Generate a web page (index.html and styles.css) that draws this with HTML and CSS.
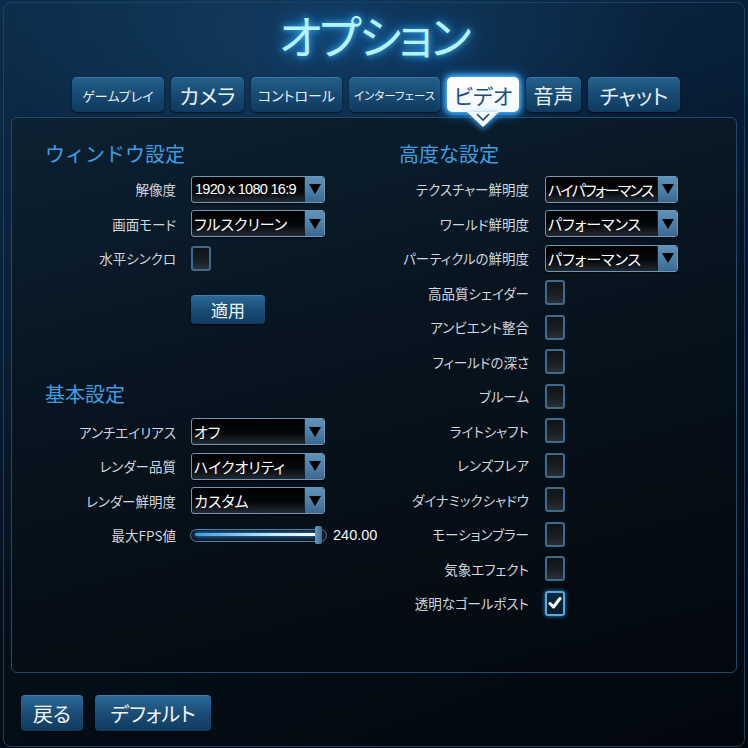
FILE: index.html
```html
<!DOCTYPE html>
<html lang="ja">
<head>
<meta charset="utf-8">
<title>オプション</title>
<link rel="stylesheet" href="styles.css">
</head>
<body>
<div class="frame">
  <h1 class="title">オプション</h1>
  <nav class="tabs">
    <div class="tab t1">ゲームプレイ</div>
    <div class="tab t2">カメラ</div>
    <div class="tab t3">コントロール</div>
    <div class="tab t4">インターフェース</div>
    <div class="tab t5 active">ビデオ
      <svg class="pointer" width="32" height="16" viewBox="0 0 32 16"><polygon points="0,0 32,0 16,15" fill="#f4faff"/><polyline points="10,2 16,8 22,2" fill="none" stroke="#1c4a78" stroke-width="1.6"/></svg>
    </div>
    <div class="tab t6">音声</div>
    <div class="tab t7">チャット</div>
  </nav>
  <section class="panel">
    <div class="col left">
      <h2 class="heading">ウィンドウ設定</h2>
      <div class="row"><span class="label">解像度</span><div class="select"><span class="val num">1920 x 1080 16:9</span><span class="arrow"></span></div></div>
      <div class="row"><span class="label">画面モード</span><div class="select"><span class="val">フルスクリーン</span><span class="arrow"></span></div></div>
      <div class="row"><span class="label">水平シンクロ</span><span class="check"></span></div>
      <div class="apply-row"><button class="btn apply">適用</button></div>
      <h2 class="heading basic">基本設定</h2>
      <div class="row"><span class="label">アンチエイリアス</span><div class="select"><span class="val">オフ</span><span class="arrow"></span></div></div>
      <div class="row"><span class="label">レンダー品質</span><div class="select"><span class="val">ハイクオリティ</span><span class="arrow"></span></div></div>
      <div class="row"><span class="label">レンダー鮮明度</span><div class="select"><span class="val">カスタム</span><span class="arrow"></span></div></div>
      <div class="row slider-row"><span class="label">最大FPS値</span>
        <div class="slider"><span class="fill"></span><span class="thumb"></span></div>
        <span class="slider-val">240.00</span>
      </div>
    </div>
    <div class="col right">
      <h2 class="heading">高度な設定</h2>
      <div class="row"><span class="label">テクスチャー鮮明度</span><div class="select"><span class="val tight">ハイパフォーマンス</span><span class="arrow"></span></div></div>
      <div class="row"><span class="label">ワールド鮮明度</span><div class="select"><span class="val">パフォーマンス</span><span class="arrow"></span></div></div>
      <div class="row"><span class="label">パーティクルの鮮明度</span><div class="select"><span class="val">パフォーマンス</span><span class="arrow"></span></div></div>
      <div class="row"><span class="label">高品質シェイダー</span><span class="check"></span></div>
      <div class="row"><span class="label">アンビエント整合</span><span class="check"></span></div>
      <div class="row"><span class="label">フィールドの深さ</span><span class="check"></span></div>
      <div class="row"><span class="label">ブルーム</span><span class="check"></span></div>
      <div class="row"><span class="label">ライトシャフト</span><span class="check"></span></div>
      <div class="row"><span class="label">レンズフレア</span><span class="check"></span></div>
      <div class="row"><span class="label">ダイナミックシャドウ</span><span class="check"></span></div>
      <div class="row"><span class="label">モーションブラー</span><span class="check"></span></div>
      <div class="row"><span class="label">気象エフェクト</span><span class="check"></span></div>
      <div class="row"><span class="label">透明なゴールポスト</span><span class="check on"><svg width="14" height="14" viewBox="0 0 14 14"><path d="M2 7.5 L5.5 11 L12 2.5" fill="none" stroke="#ffffff" stroke-width="3" stroke-linecap="round" stroke-linejoin="round"/></svg></span></div>
    </div>
  </section>
  <div class="footer">
    <button class="btn back">戻る</button>
    <button class="btn default">デフォルト</button>
  </div>
</div>
</body>
</html>
```

FILE: styles.css
```css
* { box-sizing: border-box; }
html, body { margin: 0; padding: 0; }
body {
  width: 748px;
  height: 748px;
  overflow: hidden;
  background:
    radial-gradient(ellipse 340px 160px at 330px 40px, rgba(22, 70, 112, 0.7) 0%, rgba(22, 70, 112, 0) 100%),
    linear-gradient(160deg, #0d2d4a 0%, #08203a 30%, #04101c 60%, #02070c 100%);
  font-family: "Noto Sans CJK JP", "Noto Sans", sans-serif;
  font-feature-settings: "palt";
  color: #d3dae1;
}
.frame {
  margin: 2px 0 0 3px;
  width: 742px;
  height: 745px;
  border: 1px solid #1b4262;
  border-radius: 8px;
}
.title {
  margin: -2px 0 0;
  height: 76px;
  text-align: center;
  font-size: 46px;
  line-height: 66px;
  font-weight: 400;
  color: #b4f3ff;
  letter-spacing: -2.5px;
  text-shadow: 0 0 6px #3fb6ff, 0 0 16px #1f86d8, 0 0 28px #135a9c;
}
.tabs {
  display: flex;
  gap: 7px;
  padding-left: 68px;
  height: 35px;
}
.tab {
  position: relative;
  height: 35px;
  display: flex;
  align-items: center;
  justify-content: center;
  border-radius: 5px;
  background: linear-gradient(#245f8b 0%, #174a72 50%, #0f3a5d 100%);
  border-top: 1px solid #3a79a6;
  box-shadow: 0 1px 2px rgba(0, 0, 0, 0.7);
  color: #e8f0f6;
  white-space: nowrap;
}
.t1 { width: 92px; font-size: 13px; }
.t2 { width: 73px; font-size: 21px; }
.t3 { width: 91px; font-size: 14px; }
.t4 { width: 91px; font-size: 11.5px; }
.t5 { width: 72px; font-size: 21px; }
.t6 { width: 55px; font-size: 20px; }
.t7 { width: 92px; font-size: 21px; }
.tab.active {
  background: linear-gradient(#ffffff 0%, #f2f9ff 100%);
  border-top: 1px solid #ffffff;
  color: #1c4d80;
  box-shadow: 0 0 5px 2px #49b4ff, 0 0 12px 2px #1c78c8;
}
.pointer {
  position: absolute;
  top: 34px;
  left: 20px;
  filter: drop-shadow(0 2px 3px #3aa6ff);
}
.panel {
  margin: 5px 0 0 7px;
  width: 726px;
  height: 556px;
  border: 1px solid #1d4a6e;
  border-radius: 6px;
  background: linear-gradient(165deg, #0c2132 0%, #07131e 45%, #03080d 100%);
  display: flex;
  padding-top: 24px;
}
.col.left { width: 369px; padding-left: 33px; }
.col.right { width: 355px; padding-left: 18px; }
.heading {
  margin: 0 0 6px;
  height: 24px;
  font-size: 20px;
  line-height: 24px;
  font-weight: 400;
  color: #3c9fe2;
  white-space: nowrap;
  font-feature-settings: normal;
}
.heading.basic { margin-top: 58px; margin-bottom: 9px; }
.row {
  height: 34.5px;
  display: flex;
  align-items: center;
}
.left .label { width: 131px; margin-right: 15px; }
.right .label { width: 130px; margin-right: 16px; }
.label {
  text-align: right;
  font-size: 13.5px;
  color: #d0d7de;
  white-space: nowrap;
}
.select {
  width: 134px;
  height: 27px;
  display: flex;
  border: 1px solid #6f96b5;
  border-radius: 3px;
  overflow: hidden;
  background: linear-gradient(#000000 0%, #04070a 55%, #222a32 100%);
  box-shadow: 0 1px 2px rgba(0, 0, 0, 0.7);
}
.right .select { width: 133px; }
.val {
  flex: 1;
  padding-left: 2px;
  line-height: 25px;
  font-size: 15px;
  letter-spacing: 0;
  color: #ffffff;
  white-space: nowrap;
  overflow: hidden;
}
.val.tight { letter-spacing: -1.7px; }
.val.num {
  font-family: "Liberation Sans", sans-serif;
  font-size: 14.5px;
  letter-spacing: -0.7px;
  padding-left: 3px;
}
.arrow {
  width: 20px;
  flex: none;
  display: flex;
  align-items: center;
  justify-content: center;
  background: linear-gradient(#5f92ba 0%, #4a7ca4 60%, #3a6890 100%);
  border-left: 1px solid #14222e;
}
.arrow::after {
  content: "";
  border-left: 6px solid transparent;
  border-right: 6px solid transparent;
  border-top: 10px solid #000000;
}
.check {
  width: 20px;
  height: 25px;
  border: 2px solid #3c6b8e;
  border-radius: 3px;
  background: linear-gradient(#101418 0%, #1a1f25 60%, #2a3038 100%);
  display: flex;
  align-items: center;
  justify-content: center;
}
.check.on {
  border-color: #5aa9dc;
  background: linear-gradient(#0e2a44 0%, #0a1c2e 100%);
  box-shadow: 0 0 4px #2a8ad0;
}
.apply-row {
  padding-left: 146px;
  margin-top: 19px;
}
.btn {
  border: none;
  border-top: 1px solid #3d7fae;
  border-radius: 4px;
  background: linear-gradient(#2a6897 0%, #1a4d76 50%, #103b5f 100%);
  color: #f2f6fa;
  font-family: "Noto Sans CJK JP", "Noto Sans", sans-serif;
  font-feature-settings: "palt";
  padding: 0;
  box-shadow: 0 1px 2px rgba(0, 0, 0, 0.8);
}
.apply {
  width: 74px;
  height: 29px;
  font-size: 17px;
}
.slider {
  position: relative;
  margin-left: -1px;
  width: 137px;
  height: 13px;
  border: 1.5px solid #4b7c9f;
  border-radius: 7px;
  background: #0c1a26;
}
.fill {
  position: absolute;
  left: 4px;
  right: 10px;
  top: 3.5px;
  height: 3px;
  border-radius: 2px;
  background: linear-gradient(90deg, #3a9ae6 0%, #b8e6ff 60%, #ffffff 100%);
  box-shadow: 0 0 4px #3aa8ff;
}
.thumb {
  position: absolute;
  right: 4px;
  top: -4px;
  width: 7px;
  height: 18px;
  border-radius: 2px;
  background: linear-gradient(90deg, #6a9ac0, #3f6f96);
}
.slider-val {
  margin-left: 6px;
  font-family: "Liberation Sans", sans-serif;
  font-size: 14.5px;
  color: #f2f4f6;
}
.footer {
  display: flex;
  gap: 12px;
  margin-top: 22px;
  padding-left: 17px;
}
.back { width: 62px; height: 36px; font-size: 20px; }
.default { width: 116px; height: 36px; font-size: 20px; }
```
